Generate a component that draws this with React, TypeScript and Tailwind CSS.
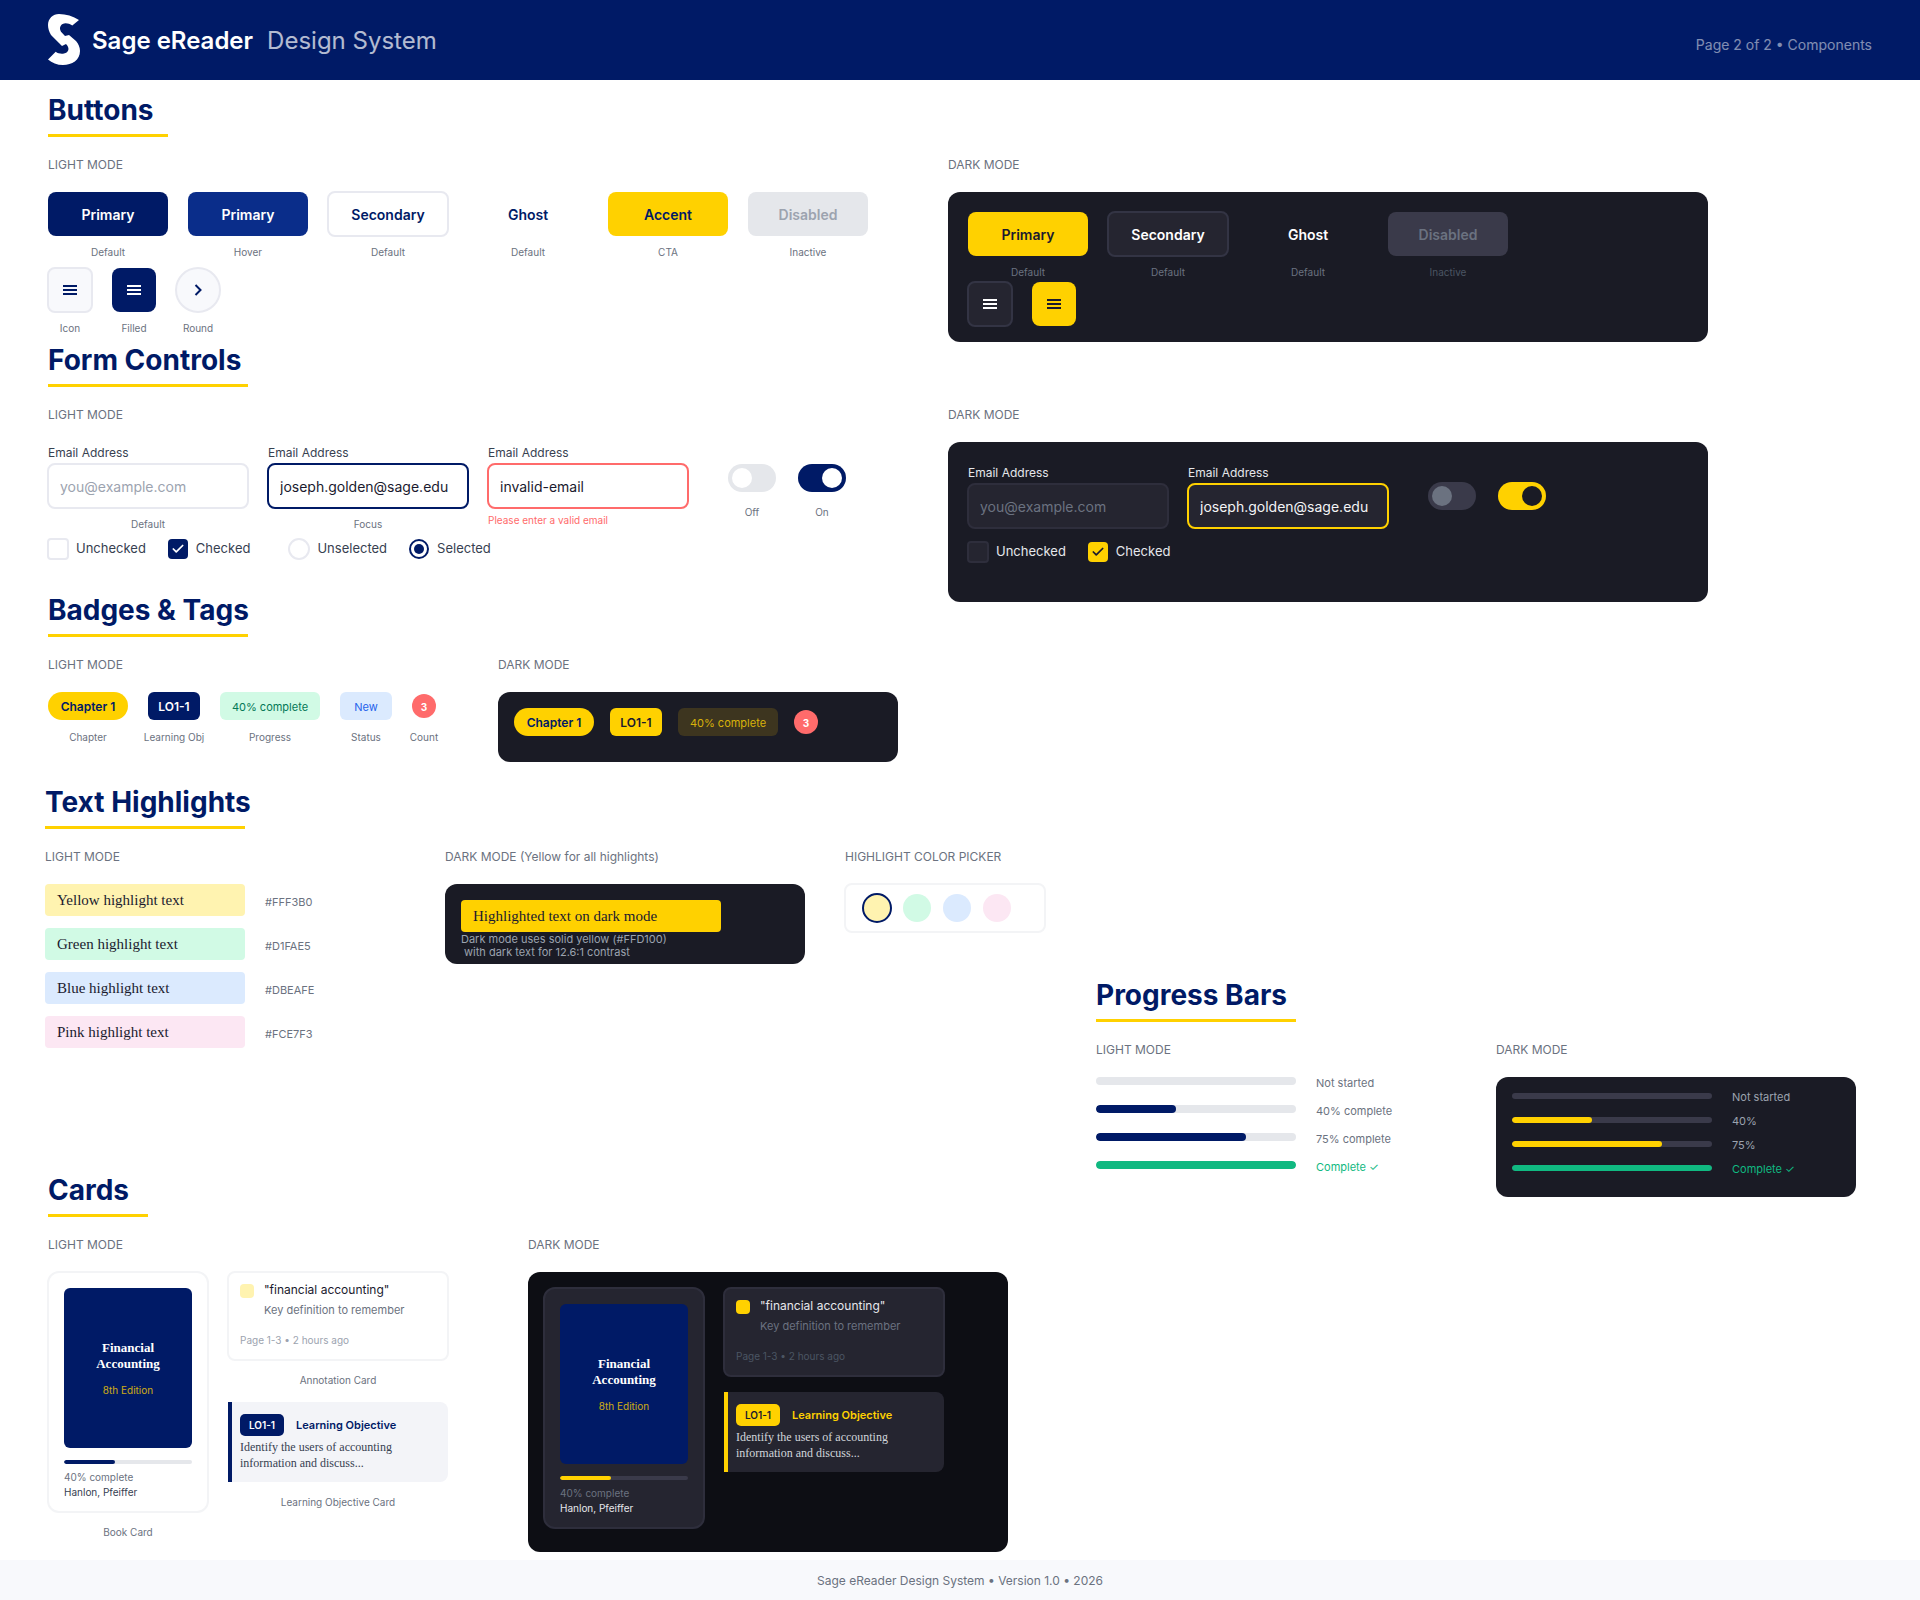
import { Check } from "lucide-react";
import type { ReactNode } from "react";

const Heading = ({ title, width }: { title: string; width: string }) => (
   <div className={width}>
      <h2 className="h-[34px] text-[28px] leading-[36px] font-bold text-[#001A66] whitespace-nowrap">{title}</h2>
      <div className="mt-2 h-[3px] bg-[#FFD100]" />
   </div>
);

const Label = ({ children, top = true }: { children: ReactNode; top?: boolean }) => (
   <div className={`${top ? "mt-5" : "pt-px"} mb-[19px] text-xs leading-4 text-[#6B7280] whitespace-nowrap`}>{children}</div>
);

const Caption = ({ children, className = "mt-[10px]" }: { children: ReactNode; className?: string }) => (
   <div className={`${className} text-[10px] leading-3 text-[#6B7280] whitespace-nowrap`}>{children}</div>
);

const Burger = ({ color }: { color: string }) => (
   <svg width="14" height="10" viewBox="0 0 14 10" fill={color}>
      <rect width="14" height="2" />
      <rect y="4" width="14" height="2" />
      <rect y="8" width="14" height="2" />
   </svg>
);

const Logo = () => (
   <svg width="32" height="52" viewBox="0 0 32 52" fill="#fff">
      <path d="M11 0C18 0 25 2 31 6L24.300 11.500C22 10 20 9.300 17.700 9.300C13 9.300 10.500 13.500 13 17.700L17 22L21 21L28 27C30.500 30 32 33 32 37C32 46 24 51 15 51C9 51 4 49 0 45.500L7.700 37.700C10 39.500 13 40 16 39.500C21 38.500 22 34 18 30L14 32L3 21C1 18 0 14 0 11C0 4.500 5 0 11 0Z" />
   </svg>
);

const LightButton = ({ label, note, className }: { label: string; note: string; className: string }) => (
   <div className="w-[120px] flex flex-col items-center">
      <div className={`flex items-center justify-center pt-0.5 text-sm font-semibold rounded-lg ${className}`}>{label}</div>
      <Caption>{note}</Caption>
   </div>
);

const Toggle = ({ track, thumb, on }: { track: string; thumb: string; on?: boolean }) => (
   <div className={`w-12 h-7 rounded-full flex items-center px-1 ${track} ${on ? "justify-end" : "justify-start"}`}>
      <div className={`w-5 h-5 rounded-full ${thumb}`} />
   </div>
);

const Field = ({ dark, value, placeholder, border, note, error }: {
   dark?: boolean; value?: string; placeholder?: string; border: string; note?: string; error?: string
}) => (
   <div className="w-[200px]">
      <div className={`pt-px text-xs leading-5 ${dark ? "text-[#E5E7EB]" : "text-[#374151]"}`}>Email Address</div>
      <input
         readOnly
         value={value ?? ""}
         placeholder={placeholder}
         className={`w-[202px] h-[46px] -mx-px border-2 rounded-lg px-[11px] pt-px text-sm outline-none ${border} ${dark ? "bg-[#252530] text-[#F3F4F6] placeholder:text-[#6B7280]" : "bg-white text-[#1A1A2E] placeholder:text-[#9CA3AF]"}`}
      />
      {note && <div className="flex justify-center"><Caption className="mt-[9px]">{note}</Caption></div>}
      {error && <div className="mt-[5px] text-[10px] leading-3 text-[#FF6B6B]">{error}</div>}
   </div>
);

const Highlight = ({ text, hex, bg }: { text: string; hex: string; bg: string }) => (
   <div className="flex items-center gap-5">
      <div className={`w-[200px] h-8 px-3 flex items-center rounded text-[15px] text-[#1A1A2E] font-['Liberation_Serif',serif] ${bg}`}>{text}</div>
      <span className="pt-1 text-[11px] text-[#6B7280]">{hex}</span>
   </div>
);

const Bar = ({ text, textColor, track, fill, width, h, shift }: {
   text: string; textColor: string; track: string; fill?: string; width?: string; h: string; shift: string
}) => (
   <div className={`flex items-center gap-5 ${h}`}>
      <div className={`w-[200px] rounded-full overflow-hidden ${h} ${track}`}>
         {fill && <div className={`h-full rounded-full ${fill} ${width}`} />}
      </div>
      <span className={`text-[11px] whitespace-nowrap ${shift} ${textColor}`}>{text}</span>
   </div>
);

const BookCard = ({ dark }: { dark?: boolean }) => (
   <div className={`w-[162px] h-[242px] -m-px rounded-xl border-2 p-[15px] ${dark ? "bg-[#252530] border-[#2E2E3C]" : "bg-white border-[#F3F4F6]"}`}>
      <div className="h-40 rounded-md bg-[#001A66] flex flex-col items-center justify-center">
         <div className="text-[13px] leading-4 font-bold text-center text-white font-['Liberation_Serif',serif]">Financial<br />Accounting</div>
         <div className="mt-3 text-[10px] leading-3 text-[#FFD100] opacity-80">8th Edition</div>
      </div>
      <div className={`mt-3 h-1 rounded-full overflow-hidden ${dark ? "bg-[#3A3A4A]" : "bg-[#E5E7EB]"}`}>
         <div className={`h-full w-[40%] rounded-full ${dark ? "bg-[#FFD100]" : "bg-[#001A66]"}`} />
      </div>
      <div className="mt-[6px] text-[10px] leading-[14px] text-[#6B7280]">40% complete</div>
      <div className={`mt-px text-[10px] leading-[14px] ${dark ? "text-[#E5E7EB]" : "text-[#374151]"}`}>Hanlon, Pfeiffer</div>
   </div>
);

const AnnotationCard = ({ dark }: { dark?: boolean }) => (
   <div className={`w-[222px] h-[90px] -m-px rounded-lg border-2 p-[11px] ${dark ? "bg-[#252530] border-[#2E2E3C]" : "bg-white border-[#F3F4F6]"}`}>
      <div className="flex gap-[10px]">
         <div className={`w-[14px] h-[14px] rounded-sm ${dark ? "bg-[#FFD100]" : "bg-[#FFF3B0]"}`} />
         <div>
            <div className={`-mt-px text-xs leading-[14px] ${dark ? "text-[#E5E7EB]" : "text-[#1A1A2E]"}`}>"financial accounting"</div>
            <div className="mt-[6px] text-[11px] leading-[14px] text-[#6B7280]">Key definition to remember</div>
         </div>
      </div>
      <div className={`mt-[17px] text-[10px] leading-3 ${dark ? "text-[#4B5563]" : "text-[#9CA3AF]"}`}>Page 1-3 • 2 hours ago</div>
   </div>
);

const ObjectiveCard = ({ dark }: { dark?: boolean }) => (
   <div className={`w-[220px] h-20 rounded-r-lg border-l-4 pl-2 pt-3 ${dark ? "bg-[#252530] border-[#FFD100]" : "bg-[#F3F4F8] border-[#001A66]"}`}>
      <div className="flex items-center gap-3">
         <div className={`w-11 h-[22px] rounded-[5px] flex items-center justify-center text-[10px] font-semibold ${dark ? "bg-[#FFD100] text-[#1A1A2E]" : "bg-[#001A66] text-white"}`}>LO1-1</div>
         <div className={`text-[11px] font-semibold ${dark ? "text-[#FFD100]" : "text-[#001A66]"}`}>Learning Objective</div>
      </div>
      <div className={`mt-[3px] text-xs leading-4 font-['Liberation_Serif',serif] ${dark ? "text-[#D1D5DB]" : "text-[#374151]"}`}>
         Identify the users of accounting<br />information and discuss...
      </div>
   </div>
);

export default function App() {
   return (
      <div className="w-[1920px] bg-white font-['Inter',sans-serif]">
         <header className="h-20 bg-[#001A66] px-12 flex items-center justify-between">
            <div className="flex items-center">
               <Logo />
               <span className="ml-3 pt-0.5 text-2xl font-semibold text-white">Sage eReader</span>
               <span className="ml-[14px] pt-0.5 text-2xl text-white opacity-70">Design System</span>
            </div>
            <span className="mt-[10px] text-sm text-white opacity-50">Page 2 of 2 • Components</span>
         </header>

         <div className="pl-12 pt-3 grid grid-cols-[900px_760px]">
            <div>
               <section>
                  <Heading title="Buttons" width="w-[120px]" />
                  <Label>LIGHT MODE</Label>
                  <div className="flex gap-5 items-start">
                     <LightButton label="Primary" note="Default" className="w-[120px] h-11 bg-[#001A66] text-white" />
                     <LightButton label="Primary" note="Hover" className="w-[120px] h-11 bg-[#0A2D8A] text-white" />
                     <LightButton label="Secondary" note="Default" className="w-[122px] h-[46px] -my-px bg-white border-2 border-[#E8E9F0] text-[#001A66]" />
                     <LightButton label="Ghost" note="Default" className="w-[120px] h-11 text-[#001A66]" />
                     <LightButton label="Accent" note="CTA" className="w-[120px] h-11 bg-[#FFD100] text-[#001A66]" />
                     <LightButton label="Disabled" note="Inactive" className="w-[120px] h-11 bg-[#E5E7EB] text-[#9CA3AF]" />
                  </div>
                  <div className="mt-[10px] flex gap-5 items-start">
                     <div className="w-11 flex flex-col items-center">
                        <div className="w-[46px] h-[46px] -my-px rounded-lg bg-[#F8F9FC] border-2 border-[#E8E9F0] flex items-center justify-center"><Burger color="#001A66" /></div>
                        <Caption>Icon</Caption>
                     </div>
                     <div className="w-11 flex flex-col items-center">
                        <div className="w-11 h-11 rounded-lg bg-[#001A66] flex items-center justify-center"><Burger color="#fff" /></div>
                        <Caption>Filled</Caption>
                     </div>
                     <div className="w-11 flex flex-col items-center">
                        <div className="w-[46px] h-[46px] -my-px rounded-full bg-[#F8F9FC] border-2 border-[#E8E9F0] flex items-center justify-center">
                           <svg width="16" height="16" viewBox="0 0 16 16" fill="none" stroke="#001A66" strokeWidth="2"><path d="M5.500 3l5 5-5 5" /></svg>
                        </div>
                        <Caption>Round</Caption>
                     </div>
                  </div>
               </section>

               <section className="mt-2">
                  <Heading title="Form Controls" width="w-[200px]" />
                  <Label>LIGHT MODE</Label>
                  <div className="flex gap-5 items-start">
                     <Field placeholder="you@example.com" border="border-[#E8E9F0]" note="Default" />
                     <Field value="joseph.golden@sage.edu" border="border-[#001A66]" note="Focus" />
                     <Field value="invalid-email" border="border-[#FF6B6B]" error="Please enter a valid email" />
                     <div className="ml-5 pt-[22px] flex gap-[22px]">
                        <div className="flex flex-col items-center">
                           <Toggle track="bg-[#E5E7EB]" thumb="bg-white" />
                           <Caption className="mt-[14px]">Off</Caption>
                        </div>
                        <div className="flex flex-col items-center">
                           <Toggle track="bg-[#001A66]" thumb="bg-white" on />
                           <Caption className="mt-[14px]">On</Caption>
                        </div>
                     </div>
                  </div>
                  <div className="mt-2 h-[21px] flex items-center text-[13px] text-[#374151]">
                     <div className="w-[22px] h-[22px] -m-px rounded border-2 border-[#E8E9F0]" />
                     <span className="ml-2">Unchecked</span>
                     <div className="ml-[22px] w-5 h-5 rounded bg-[#001A66] flex items-center justify-center"><Check size={14} strokeWidth={3} color="#fff" /></div>
                     <span className="ml-2">Checked</span>
                     <div className="-m-px ml-[38px] w-[22px] h-[22px] rounded-full border-2 border-[#E8E9F0]" />
                     <span className="ml-2">Unselected</span>
                     <div className="ml-[22px] w-5 h-5 rounded-full border-2 border-[#001A66] flex items-center justify-center"><div className="w-[10px] h-[10px] rounded-full bg-[#001A66]" /></div>
                     <span className="ml-2">Selected</span>
                  </div>
               </section>

               <section className="mt-[33px]">
                  <Heading title="Badges & Tags" width="w-[200px]" />
                  <div className="flex">
                     <div className="w-[450px]">
                        <Label>LIGHT MODE</Label>
                        <div className="flex gap-5 items-start">
                           <div className="w-20 flex flex-col items-center">
                              <div className="w-20 h-7 pt-0.5 rounded-full bg-[#FFD100] text-[#001A66] text-xs font-semibold flex items-center justify-center">Chapter 1</div>
                              <Caption className="mt-[11px]">Chapter</Caption>
                           </div>
                           <div className="w-[52px] flex flex-col items-center">
                              <div className="w-[52px] h-7 pt-0.5 rounded-md bg-[#001A66] text-white text-xs font-semibold flex items-center justify-center">LO1-1</div>
                              <Caption className="mt-[11px]">Learning Obj</Caption>
                           </div>
                           <div className="w-[100px] flex flex-col items-center">
                              <div className="w-[100px] h-7 pt-0.5 rounded-md bg-[#D1FAE5] text-[#047857] text-[11px] flex items-center justify-center">40% complete</div>
                              <Caption className="mt-[11px]">Progress</Caption>
                           </div>
                           <div className="w-[52px] flex flex-col items-center">
                              <div className="w-[52px] h-7 pt-0.5 rounded-md bg-[#DBEAFE] text-[#2563EB] text-[11px] flex items-center justify-center">New</div>
                              <Caption className="mt-[11px]">Status</Caption>
                           </div>
                           <div className="w-6 flex flex-col items-center">
                              <div className="mt-[2px] w-6 h-6 pt-0.5 rounded-full bg-[#FF6B6B] text-white text-[10px] font-bold flex items-center justify-center">3</div>
                              <Caption className="mt-[13px]">Count</Caption>
                           </div>
                        </div>
                     </div>
                     <div>
                        <Label>DARK MODE</Label>
                        <div className="w-[400px] h-[70px] rounded-xl bg-[#1A1B25] p-4 flex items-start gap-4">
                           <div className="w-20 h-7 pt-0.5 rounded-full bg-[#FFD100] text-[#001A66] text-xs font-semibold flex items-center justify-center">Chapter 1</div>
                           <div className="w-[52px] h-7 pt-0.5 rounded-md bg-[#FFD100] text-[#1A1A2E] text-xs font-semibold flex items-center justify-center">LO1-1</div>
                           <div className="w-[100px] h-7 pt-0.5 rounded-md bg-[#3D351F] text-[#D9B20A] text-[11px] flex items-center justify-center">40% complete</div>
                           <div className="mt-[2px] w-6 h-6 pt-0.5 rounded-full bg-[#FF6B6B] text-white text-[10px] font-bold flex items-center justify-center">3</div>
                        </div>
                     </div>
                  </div>
               </section>
            </div>

            <div className="pt-16">
               <Label top={false}>DARK MODE</Label>
               <div className="h-[150px] rounded-xl bg-[#1A1B25] p-5">
                  <div className="flex gap-5 items-start">
                     <div className="w-[120px] flex flex-col items-center">
                        <div className="w-[120px] h-11 pt-0.5 rounded-lg bg-[#FFD100] text-[#1A1A2E] text-sm font-semibold flex items-center justify-center">Primary</div>
                        <Caption>Default</Caption>
                     </div>
                     <div className="w-[120px] flex flex-col items-center">
                        <div className="w-[122px] h-[46px] -my-px pt-0.5 rounded-lg bg-[#252530] border-2 border-[#333444] text-white text-sm font-semibold flex items-center justify-center">Secondary</div>
                        <Caption>Default</Caption>
                     </div>
                     <div className="w-[120px] flex flex-col items-center">
                        <div className="w-[120px] h-11 pt-0.5 text-white text-sm font-semibold flex items-center justify-center">Ghost</div>
                        <Caption>Default</Caption>
                     </div>
                     <div className="w-[120px] flex flex-col items-center">
                        <div className="w-[120px] h-11 pt-0.5 rounded-lg bg-[#3A3A4A] text-[#6B7280] text-sm font-semibold flex items-center justify-center">Disabled</div>
                        <Caption><span className="text-[#4B5563]">Inactive</span></Caption>
                     </div>
                  </div>
                  <div className="mt-[3px] flex gap-5 items-center">
                     <div className="w-[46px] h-[46px] -mx-px rounded-lg bg-[#252530] border-2 border-[#333444] flex items-center justify-center"><Burger color="#fff" /></div>
                     <div className="w-11 h-11 rounded-lg bg-[#FFD100] flex items-center justify-center"><Burger color="#1A1A2E" /></div>
                  </div>
               </div>

               <div className="mt-16">
                  <Label top={false}>DARK MODE</Label>
                  <div className="h-40 rounded-xl bg-[#1A1B25] p-5">
                     <div className="flex gap-5 items-start">
                        <Field dark placeholder="you@example.com" border="border-[#2E2E3C]" />
                        <Field dark value="joseph.golden@sage.edu" border="border-[#FFD100]" />
                        <div className="ml-5 pt-5 flex gap-[22px]">
                           <Toggle track="bg-[#3A3A4A]" thumb="bg-[#6B7280]" />
                           <Toggle track="bg-[#FFD100]" thumb="bg-[#1A1B25]" on />
                        </div>
                     </div>
                     <div className="mt-[13px] h-5 flex items-center text-[13px] text-[#E5E7EB]">
                        <div className="w-[22px] h-[22px] -m-px rounded bg-[#252530] border-2 border-[#2E2E3C]" />
                        <span className="ml-2">Unchecked</span>
                        <div className="ml-[22px] w-5 h-5 rounded bg-[#FFD100] flex items-center justify-center"><Check size={14} strokeWidth={3} color="#1A1A2E" /></div>
                        <span className="ml-2">Checked</span>
                     </div>
                  </div>
               </div>
            </div>
         </div>

         <div className="mt-[22px] grid grid-cols-[1096px_1fr]">
            <div>
               <section className="pl-[45px]">
                  <Heading title="Text Highlights" width="w-[200px]" />
                  <div className="flex">
                     <div className="w-[400px]">
                        <Label>LIGHT MODE</Label>
                        <div className="flex flex-col gap-3">
                           <Highlight text="Yellow highlight text" hex="#FFF3B0" bg="bg-[#FFF3B0]" />
                           <Highlight text="Green highlight text" hex="#D1FAE5" bg="bg-[#D1FAE5]" />
                           <Highlight text="Blue highlight text" hex="#DBEAFE" bg="bg-[#DBEAFE]" />
                           <Highlight text="Pink highlight text" hex="#FCE7F3" bg="bg-[#FCE7F3]" />
                        </div>
                     </div>
                     <div className="w-[400px]">
                        <Label>DARK MODE (Yellow for all highlights)</Label>
                        <div className="w-[360px] h-20 rounded-xl bg-[#1A1B25] px-4 pt-4">
                           <div className="w-[260px] h-8 rounded bg-[#FFD100] px-3 flex items-center text-[15px] text-[#1A1A2E] font-['Liberation_Serif',serif]">Highlighted text on dark mode</div>
                           <div className="mt-px text-[11px] leading-[13px] text-[#9CA3AF] whitespace-pre">{"Dark mode uses solid yellow (#FFD100)\n with dark text for 12.6:1 contrast"}</div>
                        </div>
                     </div>
                     <div>
                        <Label>HIGHLIGHT COLOR PICKER</Label>
                        <div className="w-[202px] h-[50px] -mx-px -mt-px rounded-lg bg-white border-2 border-[#F3F4F6] pl-[17px] flex items-center gap-3">
                           <div className="w-[30px] h-[30px] -mx-px rounded-full bg-[#FFF3B0] border-2 border-[#001A66]" />
                           <div className="w-7 h-7 rounded-full bg-[#D1FAE5]" />
                           <div className="w-7 h-7 rounded-full bg-[#DBEAFE]" />
                           <div className="w-7 h-7 rounded-full bg-[#FCE7F3]" />
                        </div>
                     </div>
                  </div>
               </section>

               <section className="mt-[124px] pl-12">
                  <Heading title="Cards" width="w-[100px]" />
                  <div className="flex gap-20">
                     <div>
                        <Label>LIGHT MODE</Label>
                        <div className="flex gap-5 items-start">
                           <div className="flex flex-col items-center">
                              <BookCard />
                              <Caption className="mt-[14px]">Book Card</Caption>
                           </div>
                           <div className="flex flex-col items-center">
                              <AnnotationCard />
                              <Caption className="mt-[14px]">Annotation Card</Caption>
                              <div className="mt-4"><ObjectiveCard /></div>
                              <Caption className="mt-[14px]">Learning Objective Card</Caption>
                           </div>
                        </div>
                     </div>
                     <div>
                        <Label>DARK MODE</Label>
                        <div className="w-[480px] h-[280px] rounded-xl bg-[#0D0E14] p-4 flex gap-5 items-start">
                           <BookCard dark />
                           <div className="flex flex-col gap-4">
                              <AnnotationCard dark />
                              <ObjectiveCard dark />
                           </div>
                        </div>
                     </div>
                  </div>
               </section>
            </div>

            <section className="mt-[193px]">
               <Heading title="Progress Bars" width="w-[200px]" />
               <div className="flex">
                  <div className="w-[400px]">
                     <Label>LIGHT MODE</Label>
                     <div className="flex flex-col gap-5">
                        <Bar h="h-2" shift="mt-1" text="Not started" textColor="text-[#6B7280]" track="bg-[#E5E7EB]" />
                        <Bar h="h-2" shift="mt-1" text="40% complete" textColor="text-[#6B7280]" track="bg-[#E5E7EB]" fill="bg-[#001A66]" width="w-[40%]" />
                        <Bar h="h-2" shift="mt-1" text="75% complete" textColor="text-[#6B7280]" track="bg-[#E5E7EB]" fill="bg-[#001A66]" width="w-[75%]" />
                        <Bar h="h-2" shift="mt-1" text="Complete ✓" textColor="text-[#10B981]" track="bg-[#E5E7EB]" fill="bg-[#10B981]" width="w-full" />
                     </div>
                  </div>
                  <div>
                     <Label>DARK MODE</Label>
                     <div className="w-[360px] h-[120px] rounded-xl bg-[#1A1B25] p-4 flex flex-col gap-[18px]">
                        <Bar h="h-[6px]" shift="mt-0.5" text="Not started" textColor="text-[#9CA3AF]" track="bg-[#3A3A4A]" />
                        <Bar h="h-[6px]" shift="mt-0.5" text="40%" textColor="text-[#9CA3AF]" track="bg-[#3A3A4A]" fill="bg-[#FFD100]" width="w-[40%]" />
                        <Bar h="h-[6px]" shift="mt-0.5" text="75%" textColor="text-[#9CA3AF]" track="bg-[#3A3A4A]" fill="bg-[#FFD100]" width="w-[75%]" />
                        <Bar h="h-[6px]" shift="mt-0.5" text="Complete ✓" textColor="text-[#10B981]" track="bg-[#3A3A4A]" fill="bg-[#10B981]" width="w-full" />
                     </div>
                  </div>
               </div>
            </section>
         </div>

         <footer className="mt-2 h-10 pt-0.5 bg-[#F8F9FC] flex items-center justify-center text-xs text-[#6B7280]">
            Sage eReader Design System • Version 1.0 • 2026
         </footer>
      </div>
   );
}
